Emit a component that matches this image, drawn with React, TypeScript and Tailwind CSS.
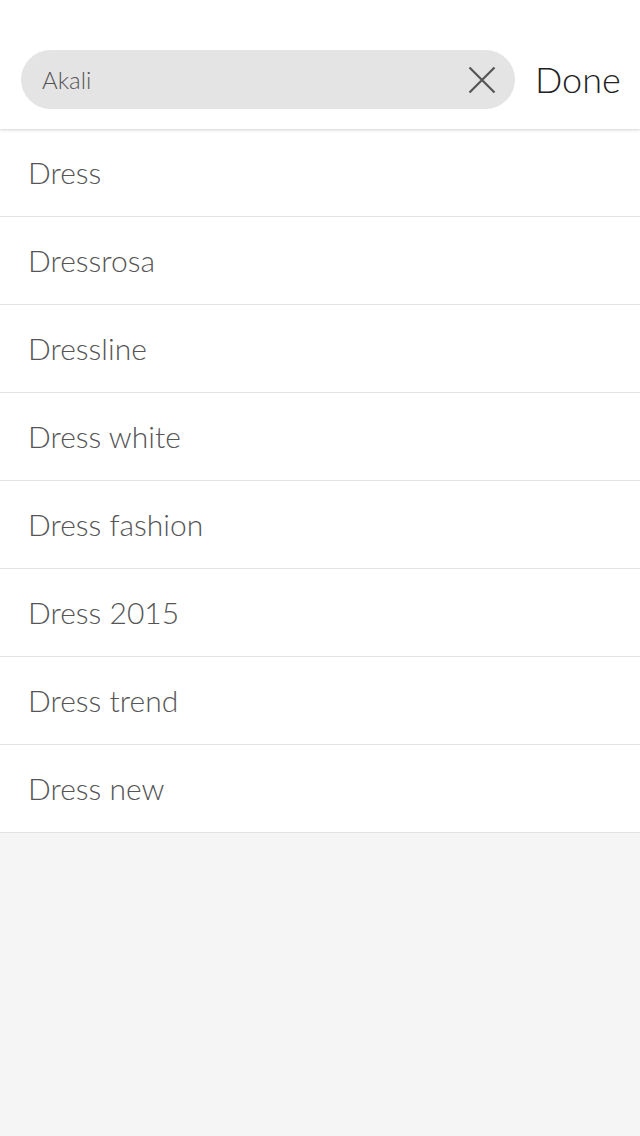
import React from "react";

const items = ["Dress", "Dressrosa", "Dressline", "Dress white", "Dress fashion", "Dress 2015", "Dress trend", "Dress new"];

export default function App() {
  return (
    <div className="w-[640px] h-[1136px] bg-[#f5f5f5] flex flex-col" style={{ fontFamily: "Lato, 'Open Sans', sans-serif" }}>
      <div className="h-[129px] bg-white flex items-end pb-[20px] pl-[21px] shadow-[0_1px_3px_rgba(0,0,0,0.18)] relative z-10">
        <div className="w-[494px] shrink-0 h-[59px] rounded-full bg-[#e4e4e4] flex items-center pl-[21px] pr-[19px]">
          <span className="flex-1 text-[24px] font-light text-[#555]">Akali</span>
          <svg width="28" height="28" viewBox="0 0 28 28" className="text-[#555]">
            <path d="M1.5 1.5 L26.5 26.5 M26.5 1.5 L1.5 26.5" stroke="currentColor" strokeWidth="2.2" fill="none" />
          </svg>
        </div>
        <span className="ml-[20px] text-[36px] font-light text-[#222] leading-[59px] whitespace-nowrap">Done</span>
      </div>
      <div className="bg-white">
        {items.map((t) => (
          <div key={t} className="h-[88px] border-b border-[#e2e2e2] flex items-center pl-[28px] text-[30px] font-light text-[#555]">
            {t}
          </div>
        ))}
      </div>
    </div>
  );
}
